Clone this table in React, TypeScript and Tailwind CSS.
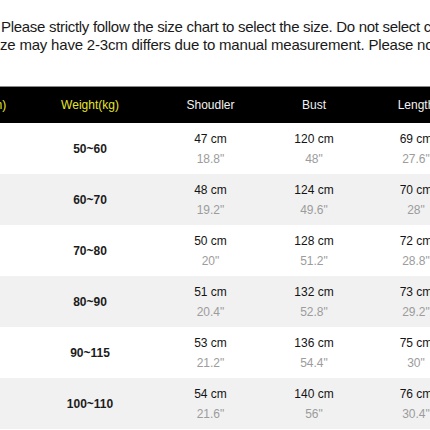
import React from "react";

const rows = [
  { weight: "50~60", shoulder: ["47 cm", '18.8"'], bust: ["120 cm", '48"'], length: ["69 cm", '27.6"'] },
  { weight: "60~70", shoulder: ["48 cm", '19.2"'], bust: ["124 cm", '49.6"'], length: ["70 cm", '28"'] },
  { weight: "70~80", shoulder: ["50 cm", '20"'], bust: ["128 cm", '51.2"'], length: ["72 cm", '28.8"'] },
  { weight: "80~90", shoulder: ["51 cm", '20.4"'], bust: ["132 cm", '52.8"'], length: ["73 cm", '29.2"'] },
  { weight: "90~115", shoulder: ["53 cm", '21.2"'], bust: ["136 cm", '54.4"'], length: ["75 cm", '30"'] },
  { weight: "100~110", shoulder: ["54 cm", '21.6"'], bust: ["140 cm", '56"'], length: ["76 cm", '30.4"'] },
];

const Measure = ({ value }: { value: string[] }) => (
  <div className="flex flex-col items-center justify-center leading-[20px] text-[12px]">
    <span className="text-[#141414]">{value[0]}</span>
    <span className="text-[#9c9c9c]">{value[1]}</span>
  </div>
);

const App = () => {
  return (
    <div className="w-[430px] h-[430px] overflow-hidden bg-white font-['Liberation_Sans',Arial,sans-serif]">
      {/* Notice text */}
      <div className="pt-[18px] text-[15px] leading-[18px] text-[#1a1a1a] whitespace-nowrap">
        <p className="pl-[1px] tracking-[-0.3px]">Please strictly follow the size chart to select the size. Do not select c</p>
        <p className="tracking-[-0.2px]">ze may have 2-3cm differs due to manual measurement. Please no</p>
      </div>

      {/* Size chart */}
      <div className="mt-[32px] overflow-hidden">
        <div className="-ml-[68px] w-[535px]">
          <div className="grid grid-cols-[90px_136px_105px_102px_102px] h-[37px] bg-black border-t border-[#8a8a8a] items-center text-center text-[12px]">
            <span className="text-[#e6e62a]">Height(cm)</span>
            <span className="text-[#e6e62a]">Weight(kg)</span>
            <span className="text-[#f2f2f2]">Shoudler</span>
            <span className="text-[#f2f2f2]">Bust</span>
            <span className="text-[#f2f2f2]">Length</span>
          </div>

          {rows.map((row, i) => (
            <div
              key={row.weight}
              className={
                "grid grid-cols-[90px_136px_105px_102px_102px] h-[51px] items-center text-center " +
                (i % 2 === 1 ? "bg-[#f1f1f1]" : "bg-white")
              }
            >
              <span />
              <span className="text-[12px] font-bold text-[#1c1c1c]">{row.weight}</span>
              <Measure value={row.shoulder} />
              <Measure value={row.bust} />
              <Measure value={row.length} />
            </div>
          ))}
        </div>
      </div>
    </div>
  );
};

export default App;
